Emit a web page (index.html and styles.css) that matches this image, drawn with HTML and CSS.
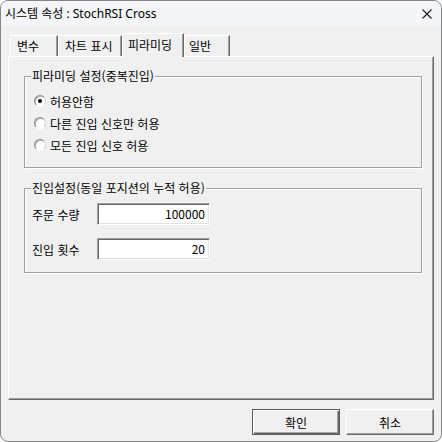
FILE: index.html
```html
<!DOCTYPE html>
<html lang="ko">
<head>
<meta charset="utf-8">
<title>시스템 속성</title>
<link rel="stylesheet" href="styles.css">
</head>
<body>
<div class="window">
  <div class="titlebar">
    <span class="title">시스템 속성 : StochRSI Cross</span>
    <svg class="close" width="10" height="10" viewBox="0 0 10 10"><path d="M0.5 0.5 L9.5 9.5 M9.5 0.5 L0.5 9.5" stroke="#1a1a1a" stroke-width="1.1" fill="none"/></svg>
  </div>
  <div class="content">
    <div class="tabstrip">
      <div class="tab tab-var">변수</div>
      <div class="tab tab-chart">차트 표시</div>
      <div class="tab tab-active">피라미딩</div>
      <div class="tab tab-general">일반</div>
    </div>
    <div class="panel">
      <div class="group group-pyramid">
        <div class="group-title">피라미딩 설정(중복진입)</div>
        <div class="radio-row"><span class="radio checked"></span>허용안함</div>
        <div class="radio-row"><span class="radio"></span>다른 진입 신호만 허용</div>
        <div class="radio-row"><span class="radio"></span>모든 진입 신호 허용</div>
      </div>
      <div class="group group-entry">
        <div class="group-title">진입설정(동일 포지션의 누적 허용)</div>
        <div class="field-row"><span class="field-label">주문 수량</span><div class="input">100000</div></div>
        <div class="field-row"><span class="field-label">진입 횟수</span><div class="input">20</div></div>
      </div>
    </div>
    <div class="footer">
      <button class="btn btn-default">확인</button>
      <button class="btn">취소</button>
    </div>
  </div>
</div>
</body>
</html>
```
FILE: styles.css
```css
html, body {
  margin: 0;
  padding: 0;
  background: #ffffff;
}
body {
  font-family: "Noto Sans CJK KR", "Noto Sans", sans-serif;
  font-size: 12px;
  color: #000;
}
.window {
  width: 442px;
  height: 442px;
  box-sizing: border-box;
  border: 1px solid #858585;
  border-radius: 8px;
  background: #f0f0f0;
  overflow: hidden;
  display: flex;
  flex-direction: column;
}
.titlebar {
  flex: none;
  height: 25px;
  background: #f3f5f8;
  display: flex;
  align-items: center;
  justify-content: space-between;
  padding: 0 9px 0 4px;
}
.title {
  font-family: "Noto Sans", "Noto Sans CJK KR", sans-serif;
  font-size: 12px;
  line-height: 14px;
  color: #000;
}
.close {
  display: block;
}
.content {
  flex: 1;
  display: flex;
  flex-direction: column;
  padding: 7px 7px 6px 7px;
}
.tabstrip {
  display: flex;
  align-items: flex-start;
  height: 24px;
  margin-bottom: -1px;
  padding-left: 2px;
  position: relative;
  z-index: 1;
}
.tab {
  box-sizing: border-box;
  height: 21px;
  margin-top: 2px;
  border-top: 1px solid #fff;
  border-left: 1px solid #fff;
  border-right: 1px solid #696969;
  box-shadow: inset -1px 0 0 #a0a0a0;
  line-height: 19px;
  padding-left: 6px;
  white-space: nowrap;
}
.tab-var { width: 48px; }
.tab-chart { width: 64px; }
.tab-active {
  width: 62px;
  height: 24px;
  margin-top: 0;
  background: #f0f0f0;
  line-height: 21px;
  padding-left: 5px;
}
.tab-general { width: 46px; padding-left: 4px; }
.panel {
  box-sizing: border-box;
  height: 344px;
  border-top: 1px solid #fff;
  border-left: 1px solid #fff;
  border-right: 1px solid #696969;
  border-bottom: 1px solid #696969;
  box-shadow: inset -1px -1px 0 #a0a0a0;
  padding: 19px 11px 0 15px;
}
.group {
  border: 1px solid #a0a0a0;
  box-shadow: inset 1px 1px 0 #fff, 1px 1px 0 #fff;
}
.group-title {
  width: fit-content;
  margin: -8px 0 0 6px;
  padding: 0 1px;
  background: #f0f0f0;
  line-height: 14px;
  white-space: nowrap;
}
.group-pyramid {
  padding: 0 0 11px 9px;
}
.group-pyramid .group-title {
  margin-bottom: 7px;
  margin-left: -3px;
}
.radio-row {
  display: flex;
  align-items: center;
  height: 22px;
}
.radio {
  position: relative;
  box-sizing: border-box;
  width: 12px;
  height: 12px;
  border-radius: 50%;
  border: 1px solid;
  border-color: #8c8c8c #d4d4d4 #ffffff #8c8c8c;
  background: #fff;
  box-shadow: inset 1px 1px 0 #b4b4b4;
  margin-right: 4px;
}
.radio.checked::after {
  content: "";
  position: absolute;
  left: 3px;
  top: 3px;
  width: 4px;
  height: 4px;
  border-radius: 50%;
  background: #000;
}
.group-entry {
  margin-top: 20px;
  padding: 0 0 12px 7px;
}
.group-entry .group-title {
  margin-left: -1px;
  margin-bottom: 8px;
}
.field-row {
  display: flex;
  align-items: center;
  height: 22px;
}
.field-row + .field-row {
  margin-top: 13px;
}
.field-label {
  width: 65px;
}
.input {
  box-sizing: border-box;
  width: 113px;
  height: 22px;
  background: #fff;
  border: 1px solid;
  border-color: #a0a0a0 #ffffff #ffffff #a0a0a0;
  box-shadow: inset 1px 1px 0 #696969, inset -1px -1px 0 #e3e3e3;
  text-align: right;
  padding-right: 4px;
  line-height: 20px;
}
.footer {
  display: flex;
  justify-content: flex-end;
  gap: 6px;
  margin-top: 9px;
}
.btn {
  box-sizing: border-box;
  width: 88px;
  height: 26px;
  margin: 0;
  padding: 0;
  font-family: "Noto Sans CJK KR", "Noto Sans", sans-serif;
  font-size: 12px;
  color: #000;
  background: #f0f0f0;
  border: 1px solid;
  border-color: #ffffff #696969 #696969 #ffffff;
  box-shadow: inset -1px -1px 0 #a0a0a0;
}
.btn-default {
  border-color: #5a5a5a;
  box-shadow: inset 1px 1px 0 #fff, inset -1px -1px 0 #696969, inset -2px -2px 0 #a0a0a0;
}
```
